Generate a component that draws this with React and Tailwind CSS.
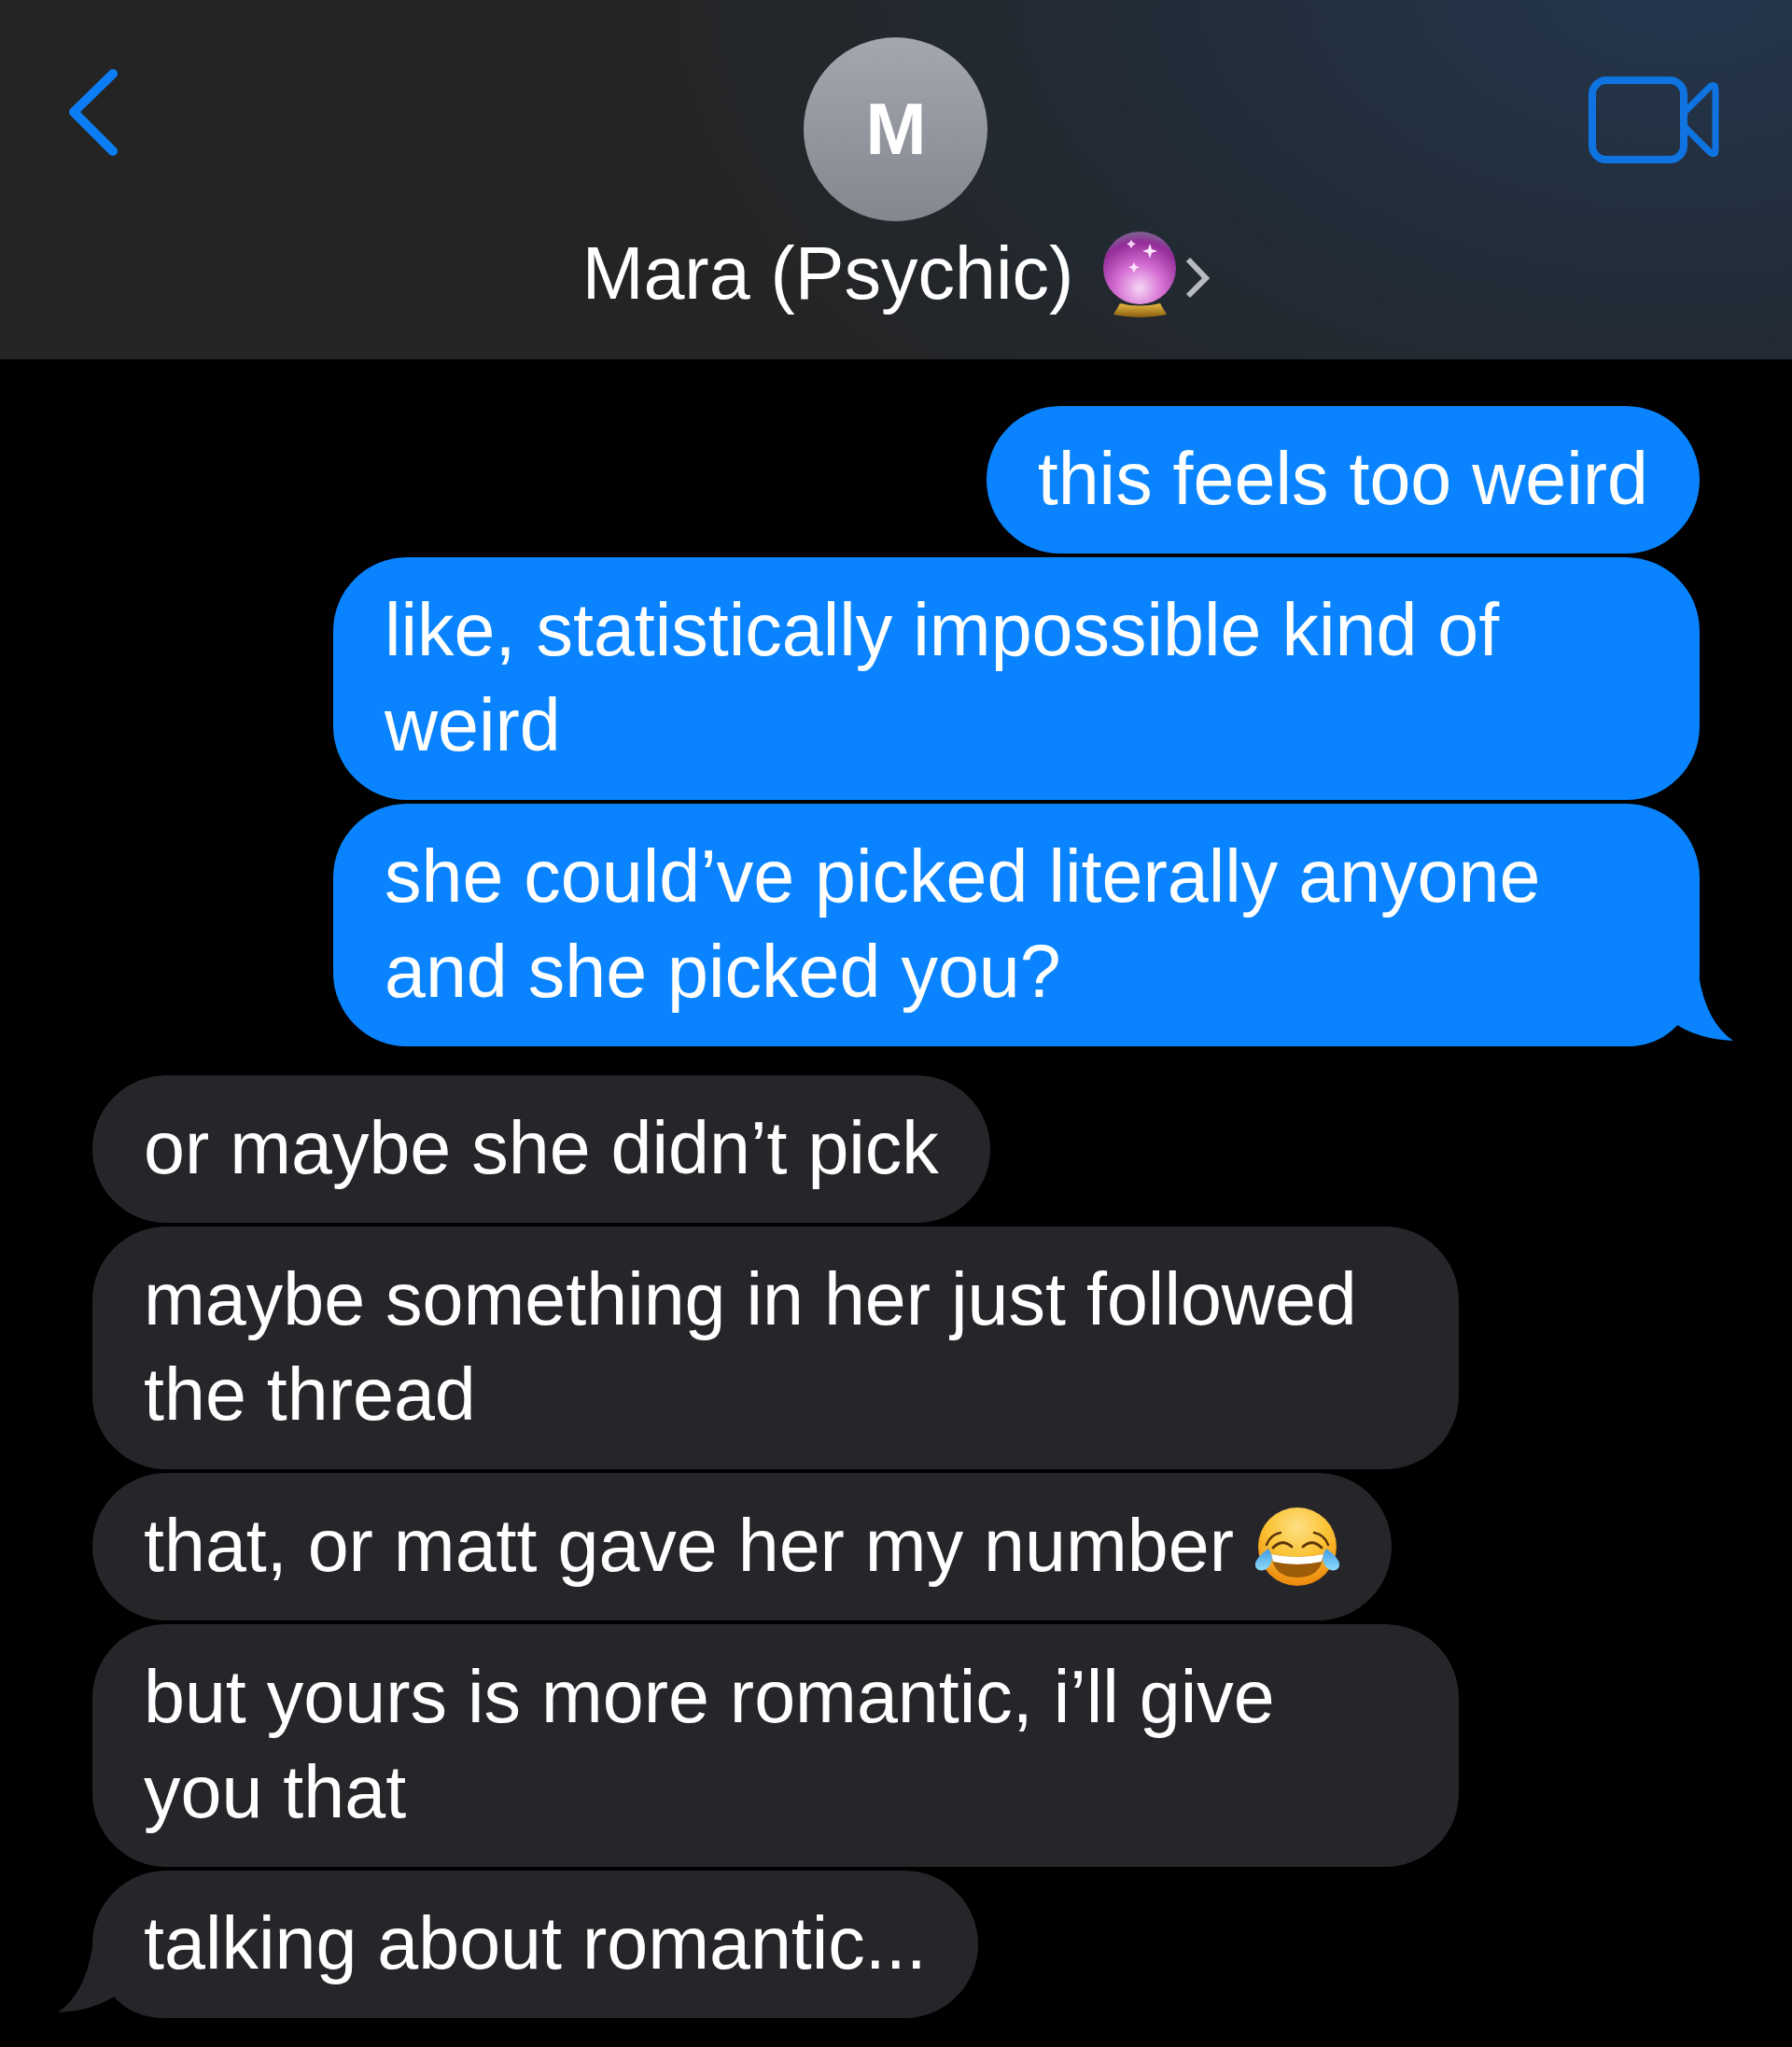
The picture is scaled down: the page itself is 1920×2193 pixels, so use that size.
import React from "react";

// Laughing emoji, drawn because no colour emoji font is installed
const JoyEmoji = () => (
  <svg viewBox="0 0 92 85" className="inline-block w-[92px] h-[85px] align-[-16px]">
    <defs>
      <radialGradient id="joyFace" cx="50%" cy="25%" r="78%">
        <stop offset="0%" stopColor="#fde084" />
        <stop offset="50%" stopColor="#fbc234" />
        <stop offset="100%" stopColor="#ec8208" />
      </radialGradient>
      <linearGradient id="joyTear" x1="0" y1="0" x2="0" y2="1">
        <stop offset="0%" stopColor="#3f9be8" />
        <stop offset="100%" stopColor="#8fdcf8" />
      </linearGradient>
    </defs>
    <circle cx="46" cy="43" r="42" fill="url(#joyFace)" />
    <path d="M13 41 Q17 30 28 28" fill="none" stroke="#5c3408" strokeWidth="2.5" strokeLinecap="round" />
    <path d="M79 41 Q75 30 64 28" fill="none" stroke="#5c3408" strokeWidth="2.5" strokeLinecap="round" />
    <path d="M20 44 Q30 34 40 43" fill="none" stroke="#5c3408" strokeWidth="3" strokeLinecap="round" />
    <path d="M52 43 Q62 34 72 44" fill="none" stroke="#5c3408" strokeWidth="3" strokeLinecap="round" />
    <path d="M18 51 Q46 57 74 51 Q72 76 46 76 Q20 76 18 51 Z" fill="#9c5c08" />
    <path d="M18 51 Q46 57 74 51 L72 59 Q46 65 20 59 Z" fill="#fff" />
    <path d="M15 45 Q22 56 16 64 Q8 72 2 66 Q-3 58 15 45 Z" fill="url(#joyTear)" />
    <path d="M77 45 Q70 56 76 64 Q84 72 90 66 Q95 58 77 45 Z" fill="url(#joyTear)" />
  </svg>
);

const CrystalBall = () => (
  <svg viewBox="0 0 81 93" className="w-[81px] h-[93px] ml-[31px] mt-[2px]">
    <defs>
      <radialGradient id="ballGlass" cx="50%" cy="78%" r="75%">
        <stop offset="0%" stopColor="#f6d6f4" />
        <stop offset="42%" stopColor="#d670d4" />
        <stop offset="85%" stopColor="#932c98" />
        <stop offset="100%" stopColor="#7f5a90" />
      </radialGradient>
      <linearGradient id="ballBase" x1="0" y1="0" x2="0" y2="1">
        <stop offset="0%" stopColor="#e8b93f" />
        <stop offset="100%" stopColor="#8a5e12" />
      </linearGradient>
    </defs>
    <circle cx="40" cy="39" r="39" fill="url(#ballGlass)" />
    <path d="M19 77 Q40 82 62 77 L69 89 Q40 95 12 89 Z" fill="url(#ballBase)" />
    <path d="M51 13 L53 19 L59 21 L53 23 L51 29 L49 23 L43 21 L49 19 Z" fill="#f9e6fa" />
    <path d="M34 33 L36 37 L40 38 L36 40 L34 44 L32 40 L28 38 L32 37 Z" fill="#f9e6fa" />
    <path d="M31 9 L33 12 L36 13 L33 15 L31 18 L29 15 L26 13 L29 12 Z" fill="#f3d0f4" />
  </svg>
);

const Bubble = ({ from, children }) => {
  const isMine = from === "me";
  return (
    <div
      className={`w-fit max-w-[1464px] rounded-[79px] px-[55px] pt-[27px] pb-[29px] text-[79px] leading-[102px] text-white ${
        isMine ? "self-end bg-[#0a84fe]" : "self-start bg-[#26262a]"
      }`}
    >
      {children}
    </div>
  );
};

// Last bubble of a group carries the tail
const Tail = ({ side }) =>
  side === "right" ? (
    <svg viewBox="0 0 115 84" className="absolute right-[-36px] bottom-0 w-[115px] h-[84px]">
      <path d="M0 84 Q35 84 55 61 Q78 76 115 78 Q86 58 78 8 L78 0 L0 0 Z" fill="#0a84fe" />
    </svg>
  ) : (
    <svg viewBox="0 0 115 84" className="absolute left-[-37px] bottom-0 w-[115px] h-[84px]">
      <path d="M115 84 Q80 84 60 61 Q37 76 0 78 Q29 58 37 8 L37 0 L115 0 Z" fill="#26262a" />
    </svg>
  );

const App = () => {
  return (
    <div className="w-[1920px] h-[2193px] overflow-hidden bg-black font-['Liberation_Sans',Arial,sans-serif]">
      <header className="grid grid-cols-[1fr_auto_1fr] h-[385px] bg-[#242424] bg-[radial-gradient(ellipse_1150px_700px_at_1800px_-20px,#24364e,#222b35_55%,transparent_100%)]">
        <div className="pl-[73px] pt-[73px]">
          <svg viewBox="0 0 54 94" className="w-[54px] h-[94px]">
            <path d="M48 6 L6 47 L48 89" fill="none" stroke="#0c7ef5" strokeWidth="10" strokeLinecap="round" strokeLinejoin="round" />
          </svg>
        </div>
        <div className="flex flex-col items-center pt-[40px]">
          <div className="flex items-center justify-center w-[197px] h-[197px] rounded-full bg-gradient-to-b from-[#a5a7af] to-[#84878f] text-[78px] font-bold text-white">
            M
          </div>
          <div className="flex items-center mt-[8px]">
            <span className="text-[79px] leading-[96px] text-white">Mara (Psychic)</span>
            <CrystalBall />
            <svg viewBox="0 0 27 45" className="w-[27px] h-[45px] ml-[7px] mt-[8px]">
              <path d="M4 3 L23 23 L4 42" fill="none" stroke="#b7bac0" strokeWidth="6" />
            </svg>
          </div>
        </div>
        <div className="flex justify-end pr-[78px] pt-[82px]">
          <svg viewBox="0 0 140 93" className="w-[140px] h-[93px]">
            <rect x="4" y="4" width="98" height="85" rx="15" fill="none" stroke="#0f74e2" strokeWidth="8" />
            <path d="M103 38 L130 11 Q136 7 136 14 V79 Q136 85 130 81 L103 54" fill="none" stroke="#0f74e2" strokeWidth="7" strokeLinejoin="round" />
          </svg>
        </div>
      </header>

      <main className="flex flex-col gap-[31px] pt-[50px] px-[99px]">
        <div className="flex flex-col gap-[4px]">
          <Bubble from="me">this feels too weird</Bubble>
          <Bubble from="me">like, statistically impossible kind of weird</Bubble>
          <div className="relative self-end">
            <Tail side="right" />
            <div className="relative flex flex-col">
              <Bubble from="me">she could’ve picked literally anyone and she picked you?</Bubble>
            </div>
          </div>
        </div>
        <div className="flex flex-col gap-[4px]">
          <Bubble from="them">or maybe she didn’t pick</Bubble>
          <Bubble from="them">maybe something in her just followed the thread</Bubble>
          <Bubble from="them">
            that, or matt gave her my number <JoyEmoji />
          </Bubble>
          <Bubble from="them">but yours is more romantic, i’ll give you that</Bubble>
          <div className="relative self-start">
            <Tail side="left" />
            <div className="relative flex flex-col">
              <Bubble from="them">talking about romantic...</Bubble>
            </div>
          </div>
        </div>
      </main>
    </div>
  );
};

export default App;
